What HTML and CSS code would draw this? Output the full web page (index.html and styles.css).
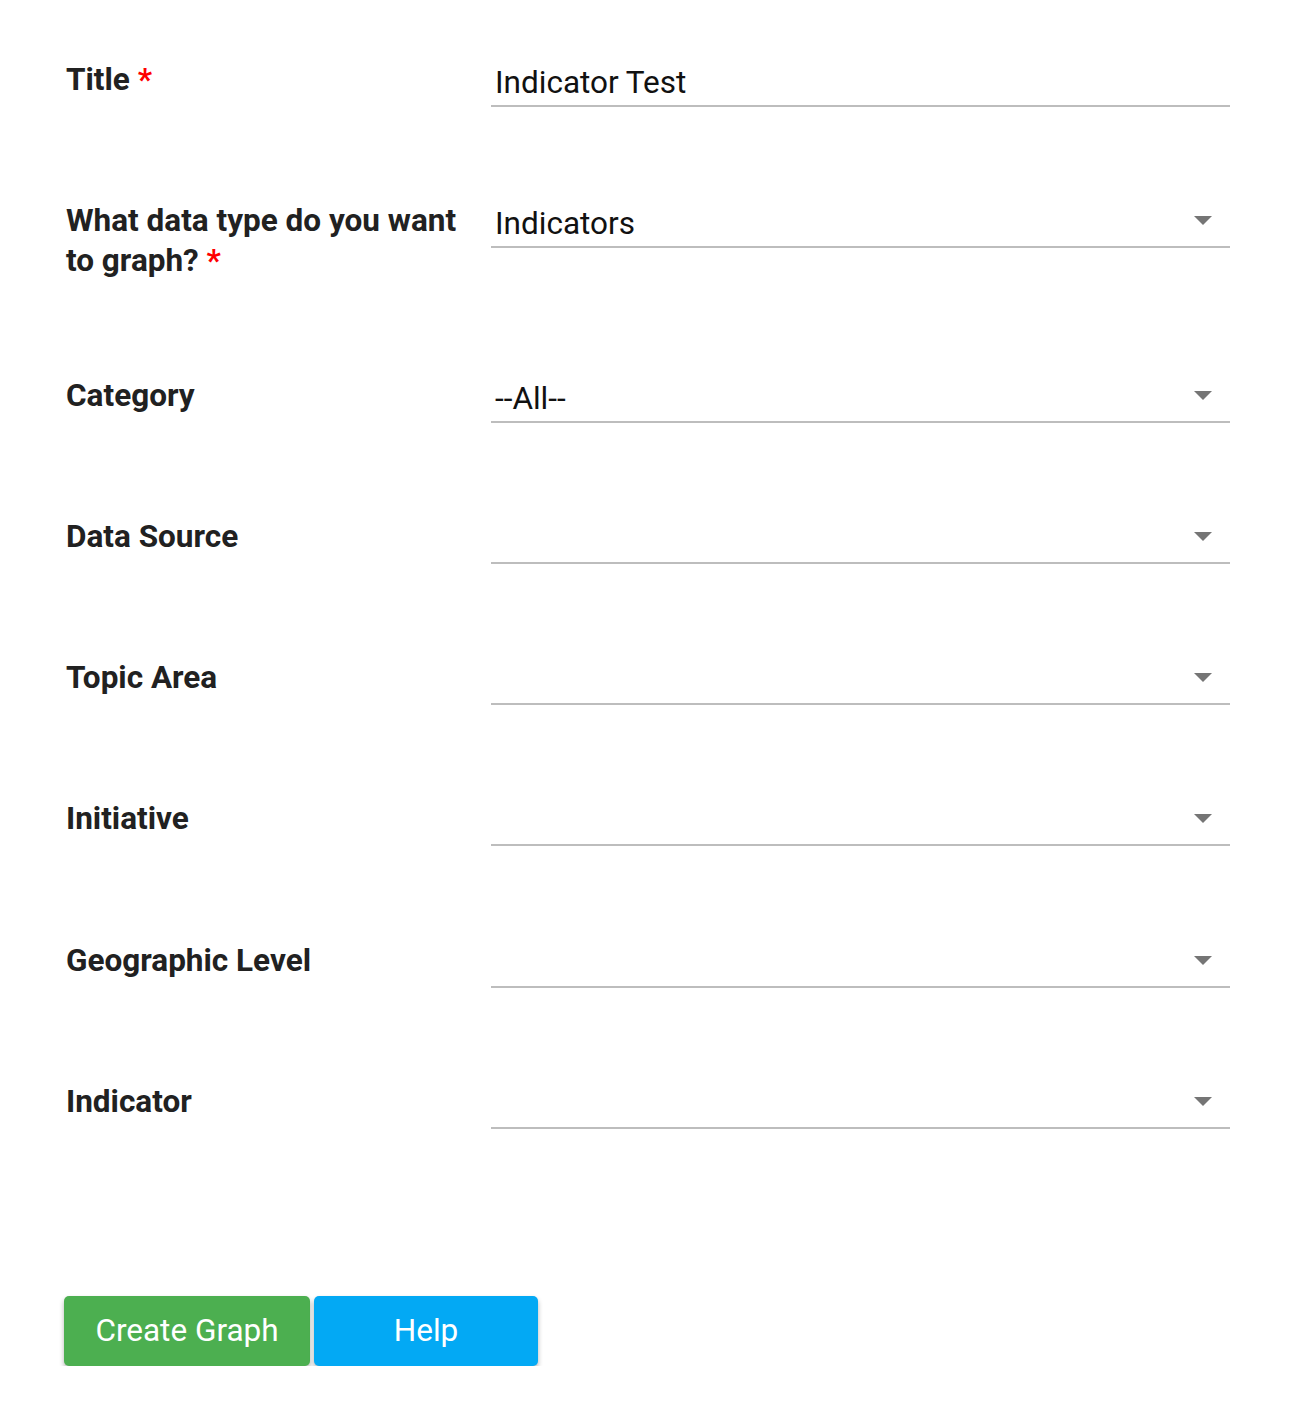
FILE: index.html
```html
<!DOCTYPE html>
<html lang="en">
<head>
<meta charset="utf-8">
<title>Create Graph</title>
<link rel="stylesheet" href="styles.css">
</head>
<body>
<form class="form">
  <div class="rows">
    <div class="row">
      <label class="label">Title <span class="req">*</span></label>
      <div class="field"><span class="value">Indicator Test</span></div>
    </div>
    <div class="row">
      <label class="label">What data type do you want to graph? <span class="req">*</span></label>
      <div class="field select"><span class="value">Indicators</span><svg class="caret" width="18" height="9" viewBox="0 0 18 9"><path d="M0 0H18L9 9Z" fill="#757575"/></svg></div>
    </div>
    <div class="row">
      <label class="label">Category</label>
      <div class="field select"><span class="value">--All--</span><svg class="caret" width="18" height="9" viewBox="0 0 18 9"><path d="M0 0H18L9 9Z" fill="#757575"/></svg></div>
    </div>
    <div class="row">
      <label class="label">Data Source</label>
      <div class="field select"><span class="value"></span><svg class="caret" width="18" height="9" viewBox="0 0 18 9"><path d="M0 0H18L9 9Z" fill="#757575"/></svg></div>
    </div>
    <div class="row">
      <label class="label">Topic Area</label>
      <div class="field select"><span class="value"></span><svg class="caret" width="18" height="9" viewBox="0 0 18 9"><path d="M0 0H18L9 9Z" fill="#757575"/></svg></div>
    </div>
    <div class="row">
      <label class="label">Initiative</label>
      <div class="field select"><span class="value"></span><svg class="caret" width="18" height="9" viewBox="0 0 18 9"><path d="M0 0H18L9 9Z" fill="#757575"/></svg></div>
    </div>
    <div class="row">
      <label class="label">Geographic Level</label>
      <div class="field select"><span class="value"></span><svg class="caret" width="18" height="9" viewBox="0 0 18 9"><path d="M0 0H18L9 9Z" fill="#757575"/></svg></div>
    </div>
    <div class="row">
      <label class="label">Indicator</label>
      <div class="field select"><span class="value"></span><svg class="caret" width="18" height="9" viewBox="0 0 18 9"><path d="M0 0H18L9 9Z" fill="#757575"/></svg></div>
    </div>
  </div>
  <div class="actions">
    <button type="button" class="btn btn-create">Create Graph</button>
    <button type="button" class="btn btn-help">Help</button>
  </div>
</form>
</body>
</html>
```
FILE: styles.css
```css
html, body {
  margin: 0;
  padding: 0;
  background: #fff;
}
body {
  font-family: Roboto, "Liberation Sans", Arial, sans-serif;
  color: #212121;
}
.form {
  padding: 60px 0 0 64px;
  width: 1166px;
}
.rows {
  display: flex;
  flex-direction: column;
  gap: 94.3px;
}
.row {
  display: grid;
  grid-template-columns: 427px 739px;
  align-items: start;
}
.label {
  font-size: 31.5px;
  line-height: 40px;
  font-weight: 700;
  color: #212121;
  padding-left: 2px;
  padding-right: 20px;
}
.req {
  color: #f00;
}
.field {
  display: flex;
  align-items: flex-start;
  padding: 3px 0 2px 4px;
  border-bottom: 2px solid #bdbdbd;
  font-size: 31.5px;
  line-height: 40px;
  color: #111;
}
.value {
  flex: 1;
  min-height: 40px;
}
.caret {
  flex: none;
  margin-top: 12px;
  margin-right: 18px;
}
.actions {
  display: flex;
  gap: 4px;
  margin-top: 167px;
}
.btn {
  height: 70px;
  border: 0;
  border-radius: 5px;
  color: #fff;
  font-family: Roboto, "Liberation Sans", Arial, sans-serif;
  font-size: 31.5px;
  line-height: 70px;
  padding: 0;
  box-shadow: 0 3px 5px rgba(0, 0, 0, 0.3);
  cursor: pointer;
}
.btn-create {
  width: 246px;
  background: #4caf50;
}
.btn-help {
  width: 224px;
  background: #03a9f4;
}
```
